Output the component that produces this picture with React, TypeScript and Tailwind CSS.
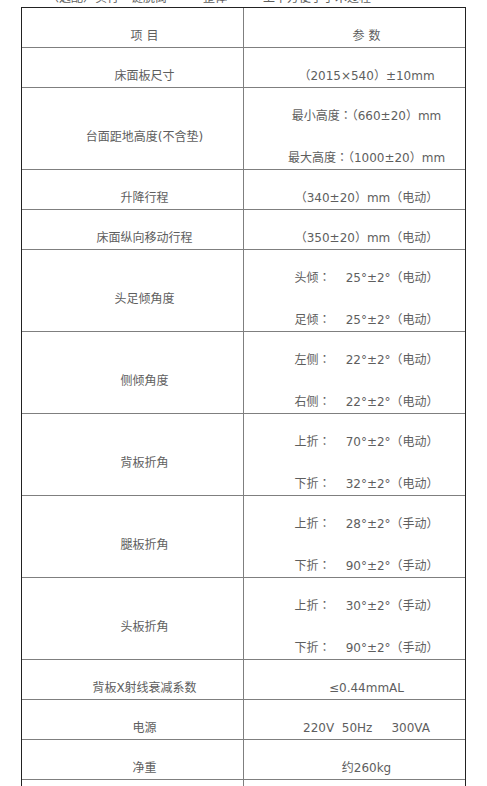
import React from 'react';

type Row = { label: string; values: string[] };

const rows: Row[] = [
  { label: '项 目', values: ['参 数'] },
  { label: '床面板尺寸', values: ['（2015×540）±10mm'] },
  { label: '台面距地高度(不含垫)', values: ['最小高度：（660±20）mm', '最大高度：（1000±20）mm'] },
  { label: '升降行程', values: ['（340±20）mm（电动）'] },
  { label: '床面纵向移动行程', values: ['（350±20）mm（电动）'] },
  { label: '头足倾角度', values: ['头倾：    25°±2°（电动）', '足倾：    25°±2°（电动）'] },
  { label: '侧倾角度', values: ['左侧：    22°±2°（电动）', '右侧：    22°±2°（电动）'] },
  { label: '背板折角', values: ['上折：    70°±2°（电动）', '下折：    32°±2°（电动）'] },
  { label: '腿板折角', values: ['上折：    28°±2°（手动）', '下折：    90°±2°（手动）'] },
  { label: '头板折角', values: ['上折：    30°±2°（手动）', '下折：    90°±2°（手动）'] },
  { label: '背板X射线衰减系数', values: ['≤0.44mmAL'] },
  { label: '电源', values: ['220V  50Hz     300VA'] },
  { label: '净重', values: ['约260kg'] },
  { label: '', values: [''] },
];

const font = { fontFamily: '"DejaVu Sans", "Noto Sans CJK TC", sans-serif' };

export default function App() {
  return (
    <div className="min-h-[786px] bg-white text-[12px] text-[#5e5e5e]" style={font}>
      {/* clipped paragraph above the table */}
      <div className="-mt-[12px] h-[19px] whitespace-pre pl-[47px] leading-[20px]">
        （选配）实行一键脱离　　　整体　　　上下方便了手术过程
      </div>

      <div className="ml-[21px] w-[445px] border border-[#222]">
        {rows.map((row, i) => (
          <div
            key={i}
            className={`grid grid-cols-[221px_1px_1fr] ${i > 0 ? 'border-t border-[#7f7f7f]' : ''}`}
          >
            {/* label */}
            <div className="flex flex-col justify-center text-center indent-6">
              <div className="pt-[18px] leading-[21px]">{row.label || '\u00a0'}</div>
            </div>
            <div className="bg-[#7f7f7f]" />
            {/* values */}
            <div className="flex flex-col text-center indent-6">
              {row.values.map((v, j) => (
                <div
                  key={j}
                  className={`whitespace-pre leading-[21px] ${j === 0 ? 'pt-[18px]' : 'mt-[21px]'}`}
                >
                  {v || '\u00a0'}
                </div>
              ))}
            </div>
          </div>
        ))}
      </div>
    </div>
  );
}
